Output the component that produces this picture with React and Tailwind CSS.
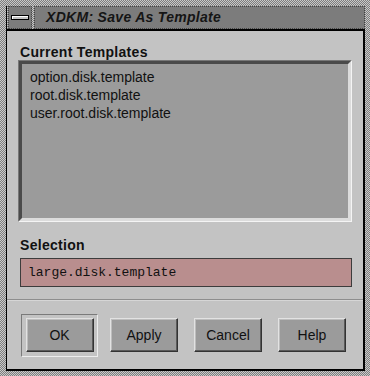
const stipple =
  "bg-[repeating-conic-gradient(#7e7e7e_0%_25%,#c9c9c9_0%_50%)] bg-[length:2px_2px]";

function Button({ label }) {
  return (
    <button className="w-[68px] h-[34px] bg-[#9b9b9b] border border-t-[#e2e2e2] border-l-[#e2e2e2] border-r-[#333] border-b-[#333] shadow-[inset_-1px_-1px_0_#5a5a5a,inset_1px_1px_0_#bdbdbd] text-[14px] text-[#111] font-['Liberation_Sans',sans-serif]">
      {label}
    </button>
  );
}

export default function App() {
  const templates = [
    "option.disk.template",
    "root.disk.template",
    "user.root.disk.template",
  ];

  return (
    <div className={`w-[370px] h-[376px] ${stipple} pt-[6px] pl-[6px] pr-[5px] pb-[5px] font-['Liberation_Sans',sans-serif]`}>
      <div className="flex flex-col h-full border-l border-black">
        {/* title bar */}
        <div className="flex h-[23px] pl-[1px] gap-[2px]">
          <div className="w-[24px] h-full bg-[#7c7c7c] border border-dotted border-[#444] flex items-center justify-center">
            <div className="w-[18px] h-[5px] bg-[#c4c4c4] border border-black shadow-[inset_1px_1px_0_#fff]"></div>
          </div>
          <div className="flex-1 h-full bg-[#7c7c7c] border border-dotted border-[#444] flex items-center pl-[11px]">
            <span className="text-[14px] font-bold italic text-[#151515] tracking-[0.3px]">
              XDKM: Save As Template
            </span>
          </div>
        </div>
        {/* body */}
        <div className="flex-1 flex flex-col bg-[#c3c3c3] border-t-2 border-r-2 border-b-2 border-black">
          <div className="px-[13px] pt-[13px]">
            <div className="text-[14px] font-bold text-[#111] leading-[17px] tracking-[0.3px]">Current Templates</div>
            <div className="mt-[-1px] w-[334px] ml-[-2px] h-[162px] border border-t-[#777] border-l-[#777] border-r-[#f4f4f4] border-b-[#f4f4f4]">
              <div className="w-full h-full bg-[#9b9b9b] border-[3px] border-t-[#4a4a4a] border-l-[#4a4a4a] border-r-[#dcdcdc] border-b-[#dcdcdc] pl-[8px] pt-[4px]">
                {templates.map((t) => (
                  <div key={t} className="text-[14px] leading-[18px] text-[#111]">
                    {t}
                  </div>
                ))}
              </div>
            </div>
            <div className="mt-[15px] text-[14px] font-bold text-[#111] leading-[17px] tracking-[0.3px]">Selection</div>
            <div className="mt-[4px] w-[332px] h-[29px] bg-[#b98e8e] border border-[#3c3c3c] flex items-center pl-[7px]">
              <span className="text-[13px] text-[#111] font-['Liberation_Mono',monospace]">
                large.disk.template
              </span>
            </div>
          </div>
          <div className="mt-[12px] border-t border-[#8e8e8e] border-b border-b-[#d6d6d6]"></div>
          <div className="flex-1 flex items-center pl-[14px] gap-[12px]">
            <div className="w-[77px] h-[43px] border border-t-[#7a7a7a] border-l-[#7a7a7a] border-r-[#ececec] border-b-[#ececec] flex items-center justify-center">
              <Button label="OK" />
            </div>
            <div className="flex gap-[16px]">
              <Button label="Apply" />
              <Button label="Cancel" />
              <Button label="Help" />
            </div>
          </div>
        </div>
      </div>
    </div>
  );
}
